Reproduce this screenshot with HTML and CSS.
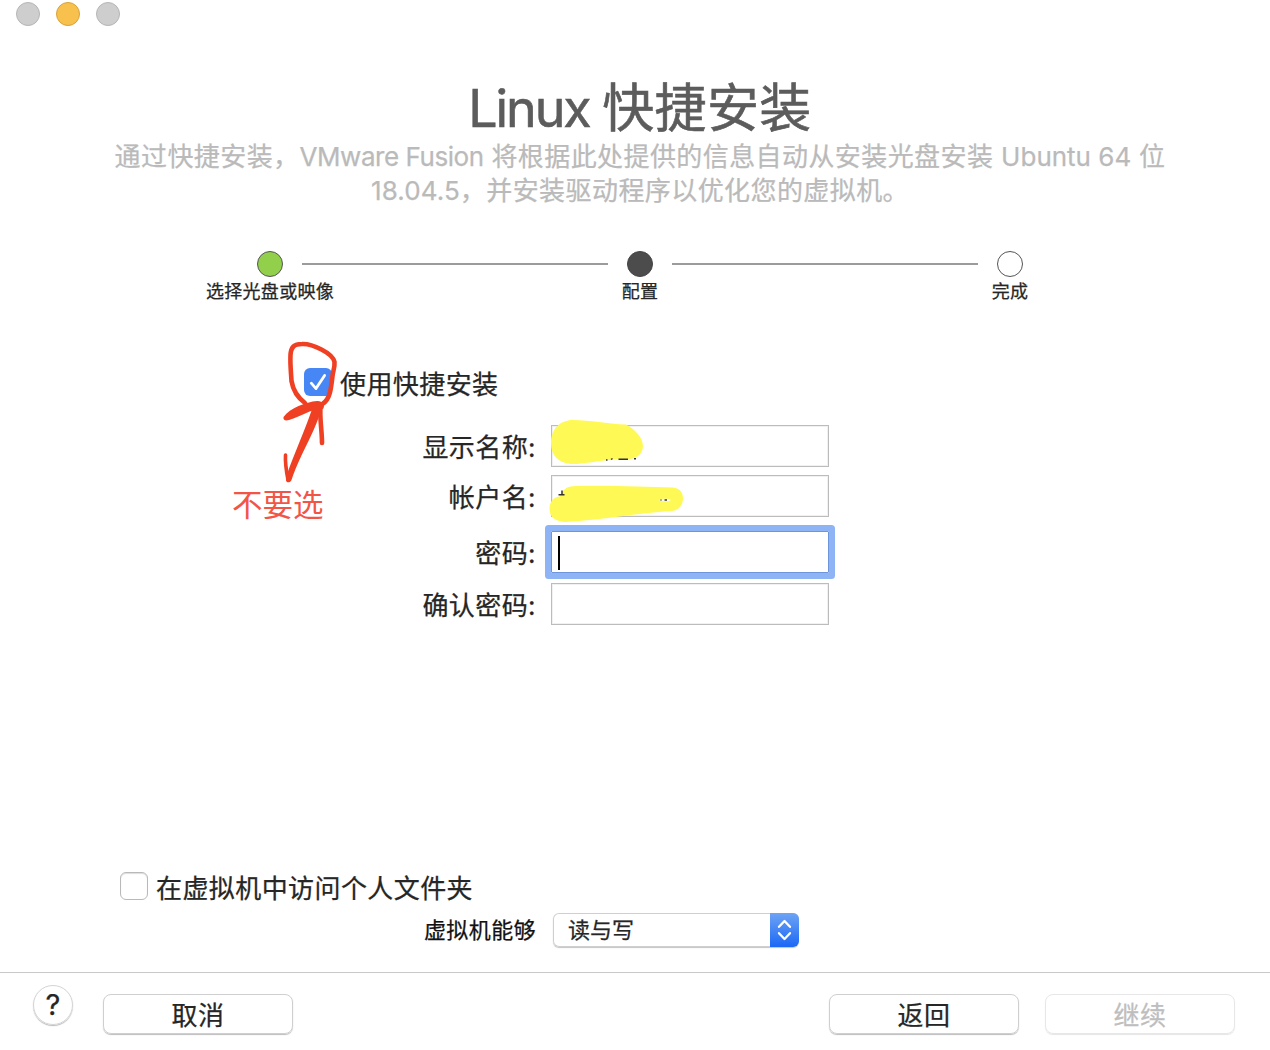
FILE: index.html
```
<!DOCTYPE html>
<html lang="zh-CN">
<head>
<meta charset="utf-8">
<title>Linux 快捷安装</title>
<link rel="stylesheet" href="styles.css">
</head>
<body>
<div class="window">
  <div class="titlebar">
    <span class="light"></span>
    <span class="light light-minimize"></span>
    <span class="light"></span>
  </div>

  <header class="heading">
    <h1><span class="latin-title">Linux </span>快捷安装</h1>
    <p class="line-one">通过快捷安装，<span class="latin-product">VMware Fusion</span> 将根据此处提供的信息自动从安装光盘安装 <span class="latin">Ubuntu 64</span> 位</p>
    <p class="line-two"><span class="latin-version">18.04.5</span>，并安装驱动程序以优化您的虚拟机。</p>
  </header>

  <div class="steps">
    <div class="step"><i class="dot done"></i><span>选择光盘或映像</span></div>
    <div class="rail"></div>
    <div class="step"><i class="dot current"></i><span>配置</span></div>
    <div class="rail"></div>
    <div class="step"><i class="dot"></i><span>完成</span></div>
  </div>

  <main class="content">
    <div class="check-row easy">
      <span class="checkbox checked">
        <svg width="28" height="28" viewBox="0 0 28 28"><path d="M7.3 15.2 L12 20.6 L20.6 7.4" fill="none" stroke="#fff" stroke-width="2.8" stroke-linecap="round" stroke-linejoin="round"/></svg>
      </span>
      <span>使用快捷安装</span>
    </div>
    <div class="form">
      <div class="field"><label>显示名称:</label><div class="input"></div></div>
      <div class="field account"><label>帐户名:</label><div class="input"></div></div>
      <div class="field password"><label>密码:</label><div class="input focused"><span class="caret"></span></div></div>
      <div class="field"><label>确认密码:</label><div class="input"></div></div>
    </div>
  </main>

  <section class="sharing">
    <div class="check-row folder">
      <span class="checkbox"></span>
      <span>在虚拟机中访问个人文件夹</span>
    </div>
    <div class="access">
      <label>虚拟机能够</label>
      <div class="select">
        <span class="value">读与写</span>
        <span class="stepper">
          <svg width="29" height="34" viewBox="0 0 29 34"><path d="M9 13.8 L14.5 8 L20 13.8 M9 20.2 L14.5 26 L20 20.2" fill="none" stroke="#fff" stroke-width="2.3" stroke-linecap="round" stroke-linejoin="round"/></svg>
        </span>
      </div>
    </div>
  </section>

  <footer class="footer">
    <span class="help">?</span>
    <span class="button cancel">取消</span>
    <span class="button back">返回</span>
    <span class="button disabled">继续</span>
  </footer>

  <svg class="ink" width="1270" height="1050" viewBox="0 0 1270 1050">
    <path fill="#fff955" d="M551 443 C551 429 560 420 573 420 C591 420 606 424 626 424.500 C635 429 643 438 643 446 C643 454 636 459 629 459 C610 458 588 464 571 464 C557 463 551 454 551 443Z"/>
    <path fill="#fff955" d="M549.500 509 C549.500 501 554 497 560 496.500 C562 489 568 486 576 486 C610 485 646 487 673 487.500 C680 488 683 493 683 498 C683 506 678 511 671 511 C640 513 600 520 566 522 C556 522 549.500 517 549.500 509Z"/>
    <path fill="none" stroke="#333" stroke-width="1.500" d="M606 460h1.500 M611 459.500l1.500-1 M618.500 459.300h9.500 M634 458.800h2 M558.500 494.800h6 M562 490.500v5"/>
    <ellipse cx="665" cy="500" rx="5.500" ry="1.300" fill="#fff"/>
    <path stroke="#333" stroke-width="1.400" d="M660.500 500h1 M664.500 500h2.500"/>
    <g fill="none" stroke="#ef4023" stroke-linecap="round" stroke-linejoin="round">
      <path stroke-width="4.600" d="M305 403 C297 397 293 390 291.500 381 C291 372 290 364 290.500 355 C291 347 294 344 302 344 C312 343.500 333 353 334.500 362 C335 367 333 371 332.500 376 C331 389 330 399 323 403.500"/>
      <path stroke-width="4.600" d="M320.500 406 C319.500 419 322 430 322 443"/>
      <path stroke-width="3.600" d="M285.500 455 C285 463 286.500 472 288 480"/>
    </g>
    <path fill="#ef4023" d="M283.500 417 C290 408 306 402 317 401 C322 400.500 326 405 323 409 C312 408 302 416 289 420 C285 421 283 420 283.500 417Z"/>
    <path fill="#ef4023" d="M313 406 L321 408 C318 427 302 450 291.500 480 C290 483.500 285.500 483 286 479 C287 470 306 429 313 406Z"/>
  </svg>
  <span class="note">不要选</span>
</div>
</body>
</html>
```
FILE: styles.css
```
* { box-sizing: border-box; }
body {
  margin: 0;
  background: #fff;
  font-family: Inter, "Noto Sans CJK SC", sans-serif;
  font-size: 26px;
  letter-spacing: 0.42px;
  color: #262626;
  -webkit-text-stroke: 0.25px currentColor;
}
.window {
  position: relative;
  width: 1270px;
  height: 1050px;
  overflow: hidden;
  display: flex;
  flex-direction: column;
  white-space: nowrap;
}
.titlebar { display: flex; gap: 16px; padding: 2px 16px; height: 78px; flex: none; }
.light { width: 24px; height: 24px; border-radius: 50%; background: #cecece; border: 1px solid #b6b6b6; }
.light-minimize { background: #f8c14e; border-color: #d7a23b; }

.heading { text-align: center; height: 173px; padding-left: 10px; flex: none; }
h1 { margin: 0; font-size: 52px; font-weight: 400; line-height: 62px; height: 62px; color: #5c5c5c; letter-spacing: 0.4px; -webkit-text-stroke-width: 0.6px; }
.latin-title { letter-spacing: -2.1px; }
.latin-product { letter-spacing: -0.45px; }
.latin { letter-spacing: 0; }
.latin-version { letter-spacing: 0.1px; }
.heading p { margin: 0; line-height: 34px; color: #bababa; }

.steps { display: flex; padding: 0 247px 0 257px; height: 117px; flex: none; }
.step { width: 26px; display: flex; flex-direction: column; align-items: center; font-size: 18px; letter-spacing: 0.3px; line-height: 30px; }
.dot { width: 26px; height: 26px; flex: none; border-radius: 50%; border: 1px solid #555; background: #fff; }
.done { background: #92d04b; }
.current { background: #4c4c4c; border-color: #444; }
.rail { flex: 1; height: 2px; margin: 12px 19px 0; background: #9b9b9b; }

.content { height: 504px; flex: none; }
.check-row { display: flex; gap: 8px; line-height: 34px; }
.easy { padding-left: 304px; height: 57px; }
.checkbox { width: 28px; height: 28px; flex: none; border-radius: 6px; border: 1px solid #b9b9b9; background: #fff; box-shadow: inset 0 1px 1px #ddd; }
.checked { border: 0; background: #4787f5; box-shadow: none; }
.checkbox svg { display: block; }
.form { display: flex; flex-direction: column; }
.field { display: flex; gap: 15px; height: 50px; }
.field label { width: 536px; text-align: right; line-height: 46px; }
.account { height: 56px; }
.password { height: 52px; }
.input { width: 278px; height: 42px; border: 1px solid #bcbcbc; box-shadow: inset 0 0 0 1px #f1f1f1; padding: 4px 6px; }
.focused { border-color: #6c95dc; box-shadow: 0 0 0 6px #8fb4f5; border-radius: 1px; }
.caret { display: block; width: 2px; height: 34px; background: #000; }

.sharing { height: 100px; flex: none; }
.folder { padding-left: 120px; height: 41px; }
.access { display: flex; gap: 17px; }
.access label { width: 536px; text-align: right; font-size: 22px; line-height: 34px; color: #111; }
.select { width: 246px; height: 34px; display: flex; justify-content: space-between; border-radius: 6px; overflow: hidden; box-shadow: inset 0 0 0 1px #cfcfcf, 0 1px 1px #c4c4c4; }
.value { padding-left: 15px; font-size: 22px; line-height: 34px; letter-spacing: 0; }
.stepper { width: 29px; background: linear-gradient(#6ea4f5, #1c68f5); }
.stepper svg { display: block; }

.footer { display: flex; flex: 1; border-top: 1px solid #c9c9c9; padding: 12px 35px 0 33px; }
.help { width: 40px; height: 40px; border-radius: 50%; border: 1px solid #d4d4d4; box-shadow: 0 1px 1px #bbb; text-align: center; font-size: 29px; line-height: 38px; letter-spacing: 0; }
.button { width: 190px; height: 40px; margin-top: 9px; border-radius: 8px; border: 1px solid #cfcfcf; box-shadow: 0 1px 1px #bdbdbd; text-align: center; line-height: 41px; }
.cancel { margin-left: 30px; }
.back { margin-left: auto; margin-right: 26px; }
.disabled { color: #bebebe; border-color: #e7e7e7; box-shadow: 0 1px 1px #e6e6e6; }

.ink { position: absolute; left: 0; top: 0; }
.note { position: absolute; left: 232px; top: 485px; font-size: 30.5px; line-height: 40px; letter-spacing: 0; color: #f25546; -webkit-text-stroke-width: 0; }
```
